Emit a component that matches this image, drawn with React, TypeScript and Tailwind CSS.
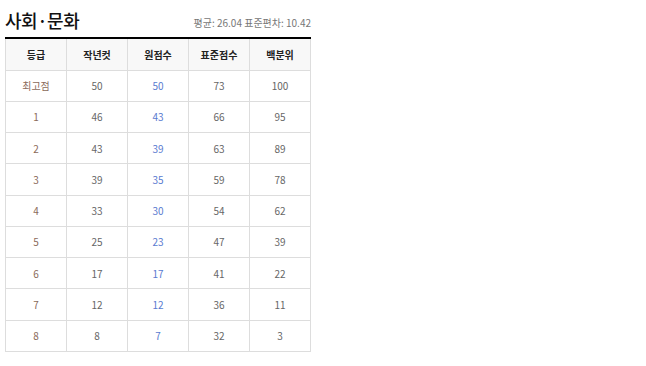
const ROWS: [string, number, number, number, number][] = [
  ["최고점", 50, 50, 73, 100],
  ["1", 46, 43, 66, 95],
  ["2", 43, 39, 63, 89],
  ["3", 39, 35, 59, 78],
  ["4", 33, 30, 54, 62],
  ["5", 25, 23, 47, 39],
  ["6", 17, 17, 41, 22],
  ["7", 12, 12, 36, 11],
  ["8", 8, 7, 32, 3],
];

const HEAD = ["등급", "작년컷", "원점수", "표준점수", "백분위"];

export default function App() {
  return (
    <div className="min-h-screen bg-white pl-[5px] pt-[5px] font-['Noto_Sans_CJK_KR',sans-serif]">
      <div className="w-[306px]">
        <div className="flex items-end justify-between h-[28px]">
          <h2 className="text-[18px] leading-[26px] font-medium text-[#111] tracking-tight">사회·문화</h2>
          <span className="text-[10px] text-[#777] mb-[3px]">평균: 26.04 표준편차: 10.42</span>
        </div>
        <table className="mt-[4px] w-[306px] border-collapse table-fixed border-t-2 border-t-black">
          <thead>
            <tr className="bg-[#f8f8f8] h-[32px]">
              {HEAD.map((h) => (
                <th key={h} className="border border-[#ddd] border-t-0 text-[10px] font-bold text-[#222] w-[61px]">
                  {h}
                </th>
              ))}
            </tr>
          </thead>
          <tbody>
            {ROWS.map((r) => (
              <tr key={r[0]} className="h-[31.25px] text-[10px] text-center">
                <td className="border border-[#ddd] text-[#8a6a5a]">{r[0]}</td>
                <td className="border border-[#ddd] text-[#666]">{r[1]}</td>
                <td className="border border-[#ddd] text-[#5a7bd0]">{r[2]}</td>
                <td className="border border-[#ddd] text-[#666]">{r[3]}</td>
                <td className="border border-[#ddd] text-[#666]">{r[4]}</td>
              </tr>
            ))}
          </tbody>
        </table>
      </div>
    </div>
  );
}
